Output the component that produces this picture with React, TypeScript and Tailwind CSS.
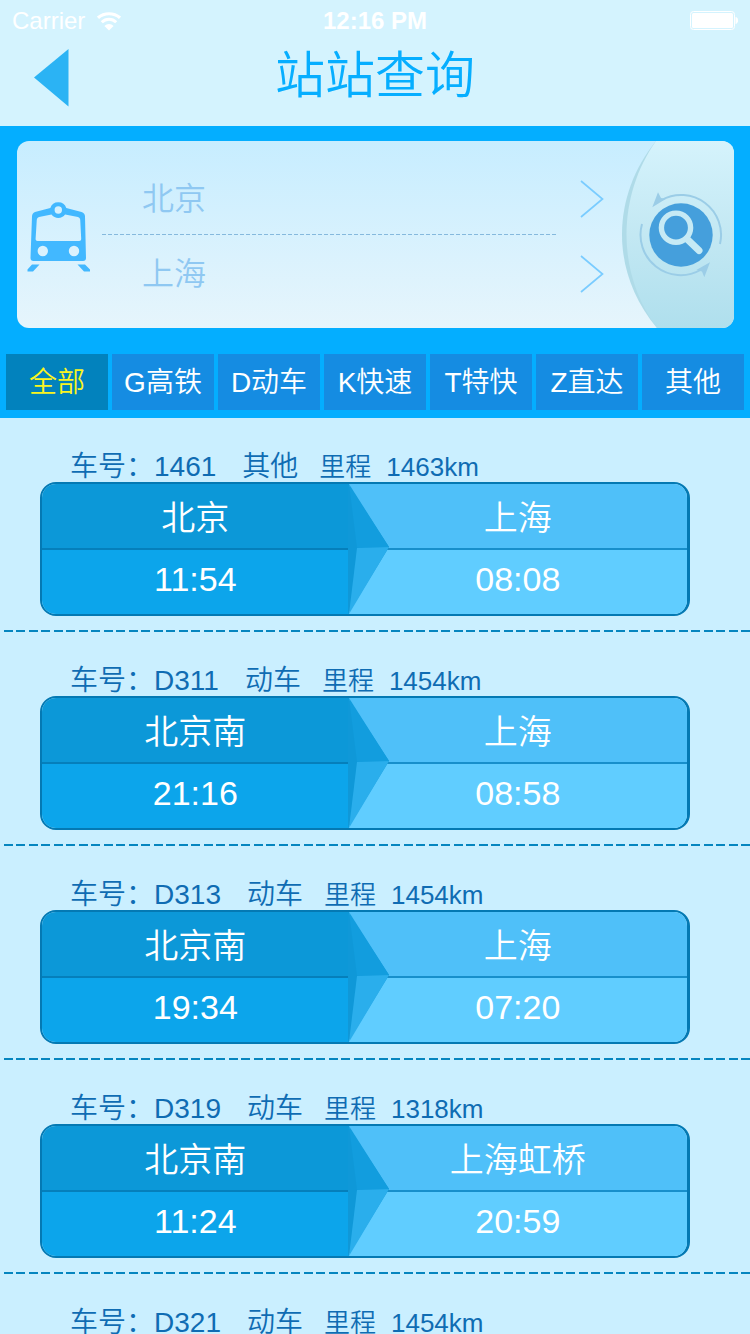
import { useState } from "react";

const tabs = ["全部", "G高铁", "D动车", "K快速", "T特快", "Z直达", "其他"];

type Train = {
  no: string;
  kind: string;
  km: string;
  from: string;
  to: string;
  depart: string;
  arrive: string;
};

const trains: Train[] = [
  { no: "1461", kind: "其他", km: "1463km", from: "北京", to: "上海", depart: "11:54", arrive: "08:08" },
  { no: "D311", kind: "动车", km: "1454km", from: "北京南", to: "上海", depart: "21:16", arrive: "08:58" },
  { no: "D313", kind: "动车", km: "1454km", from: "北京南", to: "上海", depart: "19:34", arrive: "07:20" },
  { no: "D319", kind: "动车", km: "1318km", from: "北京南", to: "上海虹桥", depart: "11:24", arrive: "20:59" },
  { no: "D321", kind: "动车", km: "1454km", from: "北京南", to: "上海", depart: "21:23", arrive: "09:12" },
];

function StatusBar() {
  return (
    <div className="grid h-10 grid-cols-3 items-center px-3 pt-0.5 text-2xl text-white">
      <div className="flex items-center gap-3">
        <span>Carrier</span>
        <svg width="24" height="19" viewBox="0 0 24 19" fill="none" aria-hidden="true">
          <path d="M1 5.8C7.2.4 16.8.4 23 5.8" stroke="#fff" strokeWidth="3.2" />
          <path d="M4.800 10.300C8.800 6.300 15.200 6.300 19.200 10.300" stroke="#fff" strokeWidth="3" />
          <path d="M7.400 14C10 11.300 14 11.300 16.600 14L12 18.500Z" fill="#fff" />
        </svg>
      </div>
      <span className="text-center font-bold">12:16 PM</span>
      <svg className="justify-self-end" width="49" height="20" viewBox="0 0 49 20" fill="none" aria-hidden="true">
        <rect x="1.5" y="0.5" width="44" height="18" rx="3" stroke="#fff" />
        <rect x="3" y="2" width="41" height="15" rx="1.5" fill="#fff" />
        <path d="M46.500 6C50 6.500 50 12.500 46.500 13Z" fill="#fff" />
      </svg>
    </div>
  );
}

function TrainIcon() {
  return (
    <svg width="64" height="72" viewBox="0 0 64 72" aria-hidden="true">
      <path
        fill="#42b8ff"
        fillRule="evenodd"
        d="M23.300 7A8.400 8.400 0 0 1 39.300 7L54.500 11Q58 12 58 15.500L59 57Q59 60 56 60H6.500Q3.500 60 3.500 57L5 15.500Q5 12 8 11ZM9.800 18.500Q10 16.500 12 16L24.500 13.500A8.400 8.400 0 0 0 38.100 13.500L51 16Q53 16.500 53.200 18.500L54.200 38Q54.200 40 52.200 40H10.500Q8.500 40 8.600 38ZM31.300 5.300A3.700 3.700 0 1 0 31.300 12.700A3.700 3.700 0 1 0 31.300 5.300ZM15.800 44.800A5.200 5.200 0 1 0 15.800 55.200A5.200 5.200 0 1 0 15.800 44.800ZM47 44.800A5.200 5.200 0 1 0 47 55.200A5.200 5.200 0 1 0 47 44.800Z"
      />
      <path fill="#42b8ff" d="M5 63.500H12.500L6 70.500H0.500V68.500ZM50.500 63.500H58L63 68.500V70.500H57Z" />
    </svg>
  );
}

function StationRow({ name }: { name: string }) {
  return (
    <button type="button" className="flex w-full items-center justify-between pr-4 pl-10 text-left text-[32px] leading-9 text-[#8fc8f2]">
      <span>{name}</span>
      <svg width="24" height="38" viewBox="0 0 24 38" fill="none" aria-hidden="true">
        <path d="M1 1L22.500 19L1 37" stroke="#7accff" strokeWidth="1.700" />
      </svg>
    </button>
  );
}

function SearchCard() {
  return (
    <div className="mr-4 ml-[17px] flex h-[187px] items-center overflow-hidden rounded-xl bg-linear-to-b from-[#c7edff] to-[#e6f5fc]">
      <div className="pt-1 pl-[10px]">
        <TrainIcon />
      </div>
      <div className="ml-[11px] flex flex-1 flex-col pt-1">
        <StationRow name="北京" />
        <div className="mt-4 mr-16 mb-5 h-px bg-[repeating-linear-gradient(90deg,#85b9dd_0_4px,transparent_4px_6px)]" />
        <StationRow name="上海" />
      </div>
      <button type="button" aria-label="查询" className="h-[187px] w-[114px]">
        <svg width="114" height="187" viewBox="0 0 114 187" fill="none" aria-hidden="true">
          <defs>
            <linearGradient id="panel" x1="0" y1="0" x2="0" y2="1">
              <stop offset="0" stopColor="#d5f3fc" />
              <stop offset="0.5" stopColor="#c3e8f3" />
              <stop offset="1" stopColor="#afdfed" />
            </linearGradient>
          </defs>
          <path d="M36 0C-8 54-11 130 37 187H60V0Z" fill="#afdbe8" />
          <path d="M36 0C-2 54-5 130 37 187H114V0Z" fill="url(#panel)" />
          <path d="M41.500 59A40 40 0 0 1 100 103M22 83A40.300 40.300 0 0 0 80.500 129" stroke="#9bcde7" strokeWidth="2" />
          <path d="M38 51.300L32.300 66.300L45.700 58L41 57ZM90 121.300L84.300 136.300L82 130.500L76.300 129Z" fill="#9bcde7" />
          <circle cx="61" cy="94" r="31.700" fill="#459fdc" />
          <circle cx="56" cy="86.700" r="14.600" stroke="#c6eaf5" strokeWidth="5.400" />
          <path d="M67 98L79 109.500" stroke="#c6eaf5" strokeWidth="7" strokeLinecap="round" />
        </svg>
      </button>
    </div>
  );
}

function TrainItem({ train }: { train: Train }) {
  return (
    <li className="pt-[34px]">
      <div className="flex h-[30px] items-center pl-[70px] whitespace-nowrap text-[#0f6cb3]">
        <span className="text-[28px]">车号：</span>
        <span className="text-[28px]">{train.no}</span>
        <span className="ml-[26px] text-[28px]">{train.kind}</span>
        <span className="ml-[21px] text-[26px]">里程</span>
        <span className="ml-[15px] text-[26px]">{train.km}</span>
      </div>
      <div className="relative mr-[60px] ml-10 grid grid-cols-[309fr_341fr] overflow-hidden rounded-2xl border-2 border-r-[3px] border-[#0479b3] text-center text-[34px] text-white">
        <div className="bg-[#0c98d8] pt-1 leading-[60px]">{train.from}</div>
        <div className="bg-[#4fc0f9] pt-1 leading-[60px]">{train.to}</div>
        <div className="border-t-2 border-[#057fbb] bg-[#0ca5eb] pb-1.5 leading-[58px]">{train.depart}</div>
        <div className="border-t-2 border-[#178fcb] bg-[#60cdff] pb-1.5 leading-[58px]">{train.arrive}</div>
        <svg className="absolute inset-y-0 left-[47.5%] h-full" width="42" viewBox="0 0 42 130" aria-hidden="true">
          <path d="M0 0L41 63L0 130Z" fill="#0f98d8" />
          <path d="M1 0L41 63L9 64Z" fill="#129dde" />
          <path d="M9 64L41 63L1 130Z" fill="#2aaeec" />
        </svg>
      </div>
      <div className="mt-[14px] ml-1 h-0.5 bg-[repeating-linear-gradient(90deg,#0585bf_0_9px,transparent_9px_12px,#0585bf_12px_21px,transparent_21px_25px)]" />
    </li>
  );
}

export default function App() {
  const [active, setActive] = useState(0);
  return (
    <div className="flex h-screen flex-col bg-[#caefff] font-['Liberation_Sans','Noto_Sans_CJK_SC',sans-serif] font-[350]">
      <header className="h-[126px] shrink-0 bg-[#d4f3fe]">
        <StatusBar />
        <div className="grid grid-cols-[1fr_auto_1fr] items-center px-8">
          <button type="button" aria-label="返回" className="justify-self-start">
            <svg width="40" height="72" viewBox="0 0 40 72" aria-hidden="true">
              <path d="M2 37.500L36.500 9V66.500Z" fill="#2bb3f4" />
            </svg>
          </button>
          <h1 className="text-[50px] leading-[72px] text-[#06aeff]">站站查询</h1>
        </div>
      </header>
      <section className="shrink-0 bg-[#04aeff] pt-[15px] pb-2">
        <SearchCard />
        <nav className="mt-[26px] grid grid-cols-7 gap-1 px-1.5">
          {tabs.map((tab, i) => (
            <button
              key={tab}
              type="button"
              aria-pressed={i === active}
              onClick={() => setActive(i)}
              className={
                i === active
                  ? "h-14 bg-[#0282bd] pt-0.5 text-[28px] text-[#faf51e]"
                  : "h-14 bg-[#158ce2] pt-0.5 text-[28px] text-white"
              }
            >
              {tab}
            </button>
          ))}
        </nav>
      </section>
      <ul className="min-h-0 flex-1 overflow-y-auto [scrollbar-width:none]">
        {trains.map((train) => (
          <TrainItem key={train.no} train={train} />
        ))}
      </ul>
    </div>
  );
}
